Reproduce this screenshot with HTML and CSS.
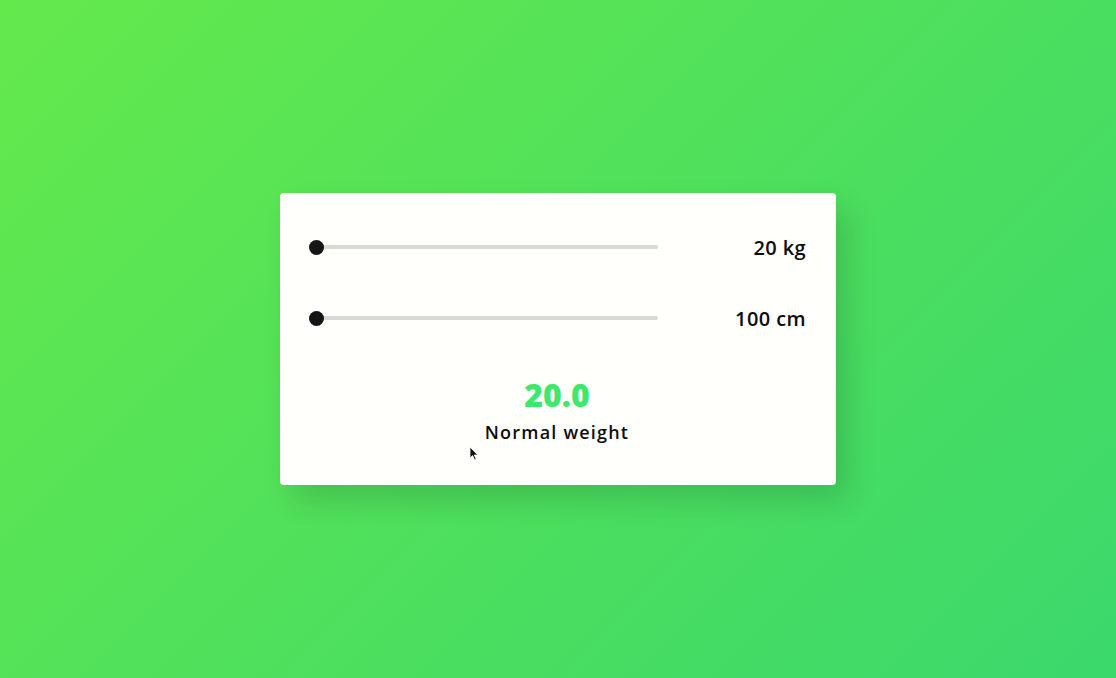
FILE: index.html
```html
<!DOCTYPE html>
<html lang="en">

<head>
    <meta charset="UTF-8">
    <meta name="viewport" content="width=device-width, initial-scale=1.0">
    <title>BMI Calculator</title>
    <link rel="stylesheet" href="styles.css">
</head>

<body>
    <div class="card">
        <div class="row">
            <input type="range" class="slider" min="20" max="200" value="20">
            <span class="value">20 kg</span>
        </div>
        <div class="row">
            <input type="range" class="slider" min="100" max="220" value="100">
            <span class="value">100 cm</span>
        </div>
        <div class="result">
            <div class="bmi">20.0</div>
            <div class="label">Normal weight</div>
        </div>
        <svg class="cursor" width="10" height="15" viewBox="0 0 10 15">
            <path d="M1 1 L1 12 L3.6 9.6 L5.6 14 L7.2 13.3 L5.3 9 L8.8 9 Z" fill="#111" stroke="#fff" stroke-width="0.8" />
        </svg>
    </div>
</body>

</html>
```

FILE: styles.css
```css
* {
    padding: 0;
    margin: 0;
    box-sizing: border-box;
}

body {
    height: 100vh;
    display: flex;
    align-items: center;
    justify-content: center;
    background: linear-gradient(135deg, #64e94c 0%, #4fe05c 50%, #3bd86c 100%);
    font-family: "Open Sans", "Noto Sans", sans-serif;
    color: #111;
}

.card {
    position: relative;
    width: 556px;
    height: 292px;
    padding: 30px 30px 0 29px;
    background: #fffffc;
    border-radius: 4px;
    box-shadow: 12px 16px 30px rgba(0, 0, 0, 0.14);
}

.row {
    height: 48px;
    display: flex;
    align-items: center;
    justify-content: space-between;
}

.row + .row {
    margin-top: 23px;
}

.slider {
    -webkit-appearance: none;
    appearance: none;
    width: 349px;
    height: 4px;
    margin: 0;
    background: #d9d9d5;
    border-radius: 2px;
    outline: none;
}

.slider::-webkit-slider-thumb {
    -webkit-appearance: none;
    width: 15px;
    height: 15px;
    border-radius: 50%;
    background: #151515;
    cursor: pointer;
}

.value {
    font-size: 20px;
    font-weight: 600;
    letter-spacing: 0.4px;
    color: #0d0d0d;
}

.result {
    margin-top: 35px;
    text-align: center;
    padding-right: 1px;
}

.bmi {
    font-size: 32px;
    line-height: 36px;
    font-weight: 800;
    color: #3fe86c;
}

.label {
    margin-top: 7px;
    font-size: 18px;
    line-height: 24px;
    font-weight: 600;
    letter-spacing: 1.2px;
    color: #0d0d0d;
}

.cursor {
    position: absolute;
    left: 189px;
    top: 253px;
}
```
